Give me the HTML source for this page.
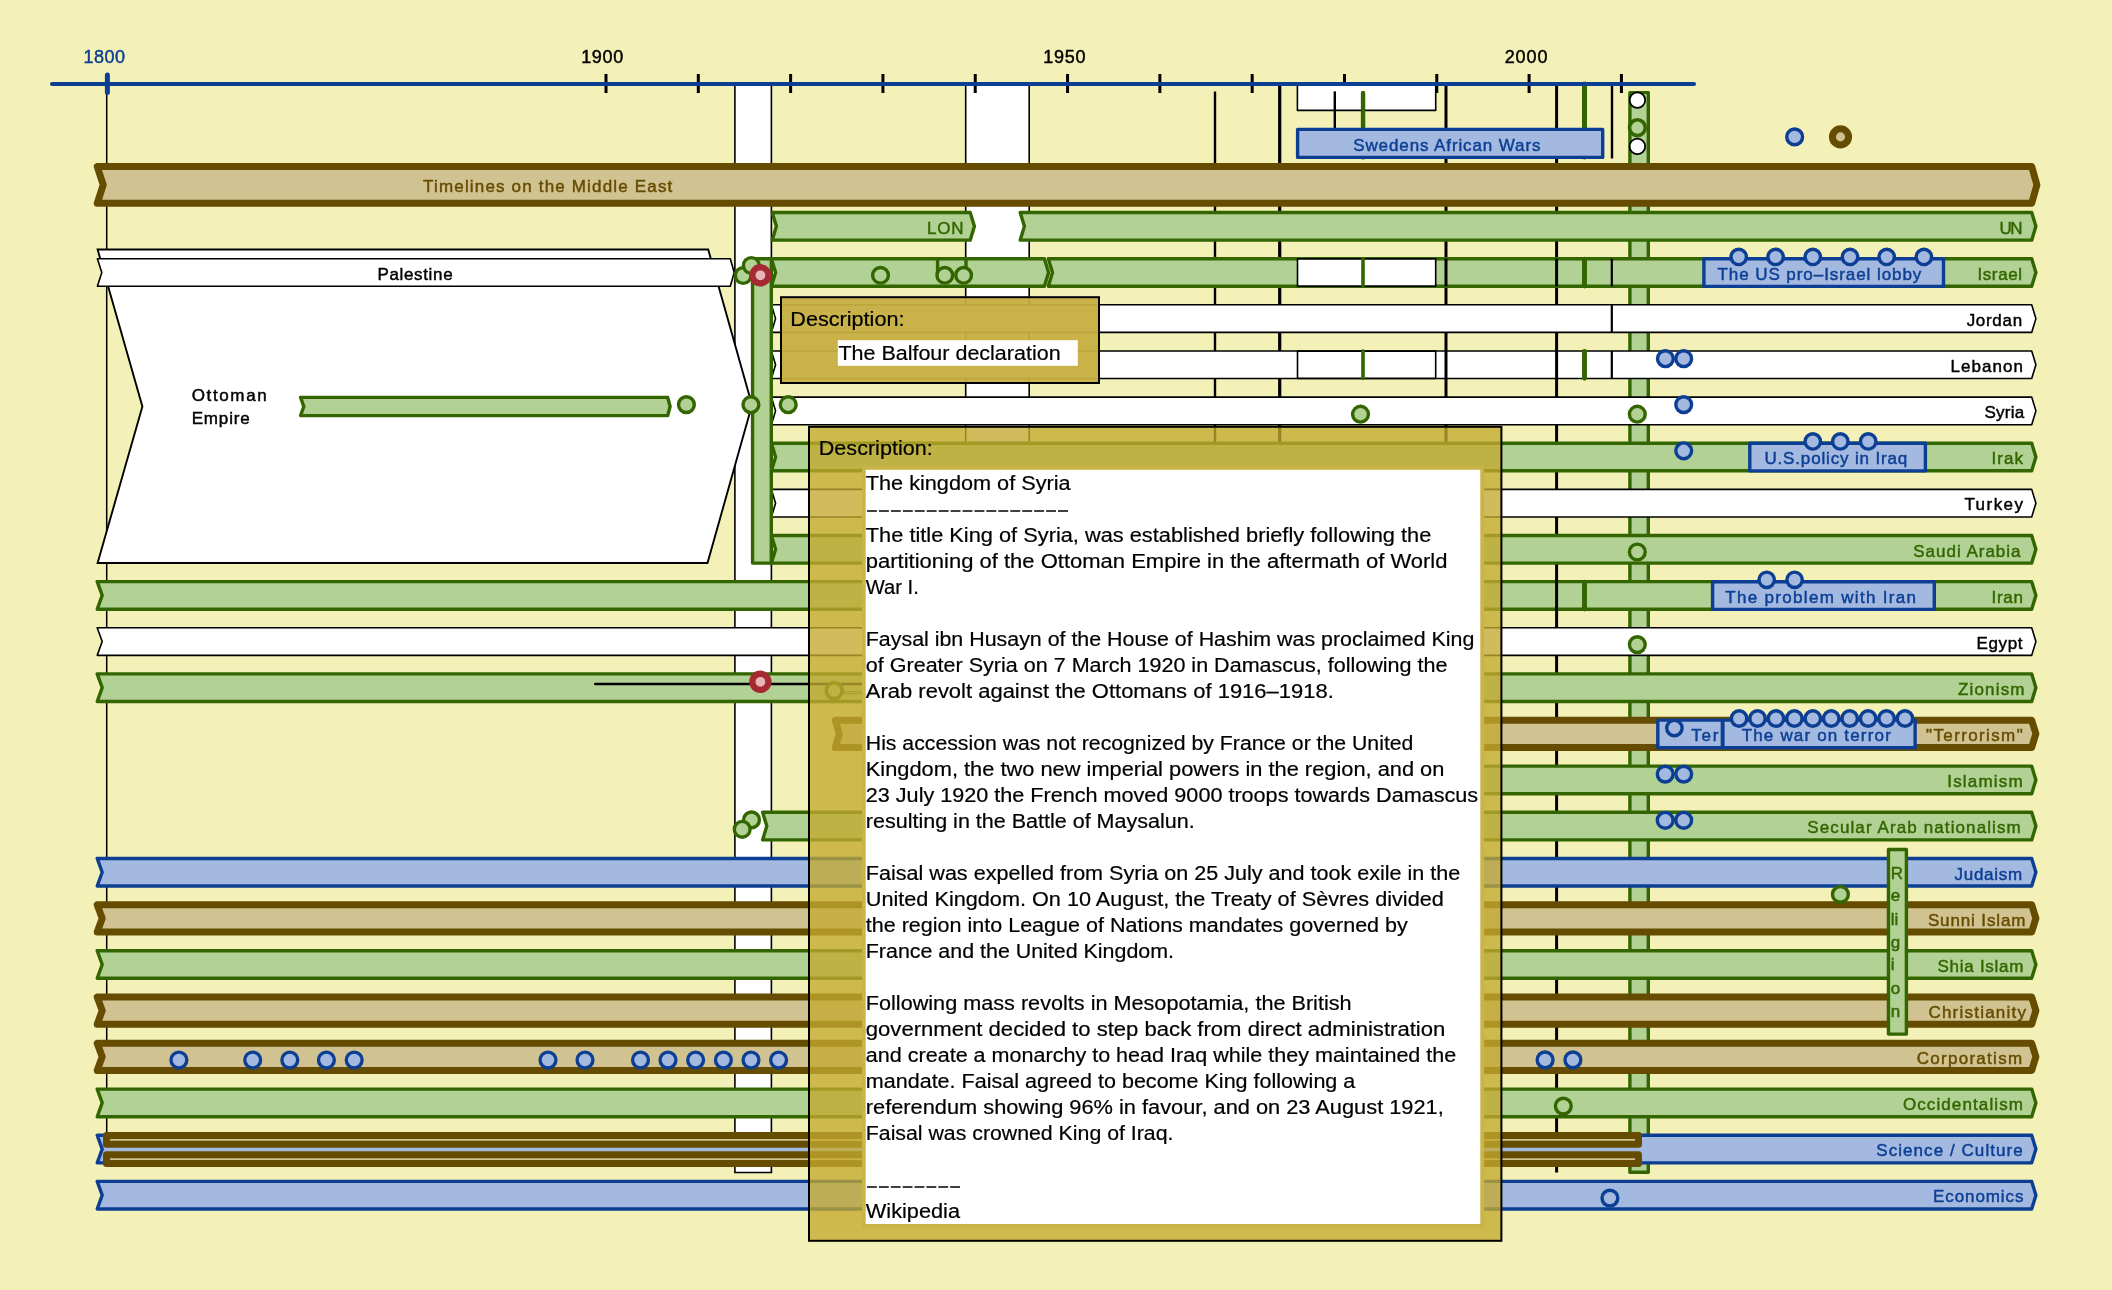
<!DOCTYPE html>
<html><head><meta charset="utf-8"><title>Timelines on the Middle East</title>
<style>html,body{margin:0;padding:0;background:#F3F1B7;overflow:hidden}
svg{display:block;will-change:transform}text{font-family:"Liberation Sans",sans-serif;white-space:pre}</style></head>
<body><svg width="2112" height="1290" viewBox="0 0 2112 1290">
<rect x="0" y="0" width="2112" height="1290" fill="#F3F1B7"/>
<rect x="734.9" y="84" width="36.5" height="1088.5" fill="#fff"/>
<line x1="734.9" y1="84" x2="734.9" y2="1172.5" stroke="#000" stroke-width="1.6" stroke-linecap="butt"/>
<line x1="771.4" y1="84" x2="771.4" y2="1172.5" stroke="#000" stroke-width="1.6" stroke-linecap="butt"/>
<line x1="734.1" y1="1172.5" x2="772.2" y2="1172.5" stroke="#000" stroke-width="1.6" stroke-linecap="butt"/>
<rect x="965.7" y="84" width="63.5" height="1088.5" fill="#fff"/>
<line x1="965.7" y1="84" x2="965.7" y2="1172.5" stroke="#000" stroke-width="1.6" stroke-linecap="butt"/>
<line x1="1029.2" y1="84" x2="1029.2" y2="1172.5" stroke="#000" stroke-width="1.6" stroke-linecap="butt"/>
<line x1="964.9" y1="1172.5" x2="1030" y2="1172.5" stroke="#000" stroke-width="1.6" stroke-linecap="butt"/>
<line x1="606" y1="74" x2="606" y2="93" stroke="#000" stroke-width="3" stroke-linecap="butt"/>
<line x1="698.31" y1="74" x2="698.31" y2="93" stroke="#000" stroke-width="3" stroke-linecap="butt"/>
<line x1="790.62" y1="74" x2="790.62" y2="93" stroke="#000" stroke-width="3" stroke-linecap="butt"/>
<line x1="882.93" y1="74" x2="882.93" y2="93" stroke="#000" stroke-width="3" stroke-linecap="butt"/>
<line x1="975.24" y1="74" x2="975.24" y2="93" stroke="#000" stroke-width="3" stroke-linecap="butt"/>
<line x1="1067.55" y1="74" x2="1067.55" y2="93" stroke="#000" stroke-width="3" stroke-linecap="butt"/>
<line x1="1159.86" y1="74" x2="1159.86" y2="93" stroke="#000" stroke-width="3" stroke-linecap="butt"/>
<line x1="1252.17" y1="74" x2="1252.17" y2="93" stroke="#000" stroke-width="3" stroke-linecap="butt"/>
<line x1="1344.48" y1="74" x2="1344.48" y2="93" stroke="#000" stroke-width="3" stroke-linecap="butt"/>
<line x1="1436.79" y1="74" x2="1436.79" y2="93" stroke="#000" stroke-width="3" stroke-linecap="butt"/>
<line x1="1529.1" y1="74" x2="1529.1" y2="93" stroke="#000" stroke-width="3" stroke-linecap="butt"/>
<line x1="1621.41" y1="74" x2="1621.41" y2="93" stroke="#000" stroke-width="3" stroke-linecap="butt"/>
<line x1="106.7" y1="84" x2="106.7" y2="1150" stroke="#000" stroke-width="1.5" stroke-linecap="butt"/>
<line x1="1215" y1="91.4" x2="1215" y2="1172.5" stroke="#000" stroke-width="2.4" stroke-linecap="butt"/>
<line x1="1279.7" y1="84" x2="1279.7" y2="1172.5" stroke="#000" stroke-width="3.2" stroke-linecap="butt"/>
<line x1="1446" y1="84" x2="1446" y2="1172.5" stroke="#000" stroke-width="3" stroke-linecap="butt"/>
<line x1="1556.6" y1="84" x2="1556.6" y2="1172.5" stroke="#000" stroke-width="3" stroke-linecap="butt"/>
<rect x="1297.4" y="84" width="138.3" height="26.4" fill="#fff" stroke="#000" stroke-width="1.6" stroke-linejoin="round" />
<line x1="1334.8" y1="91.4" x2="1334.8" y2="150" stroke="#000" stroke-width="2.4" stroke-linecap="butt"/>
<line x1="1363.05" y1="93" x2="1363.05" y2="157.4" stroke="#336600" stroke-width="4.4" stroke-linecap="round"/>
<line x1="1612" y1="84" x2="1612" y2="158.5" stroke="#000" stroke-width="2.4" stroke-linecap="butt"/>
<rect x="1629.9" y="92.6" width="18.4" height="1079.6" fill="#B2D194" stroke="#336600" stroke-width="3.4" stroke-linejoin="round" />
<circle cx="1637.4" cy="100.1" r="7.8" fill="#fff" stroke="#000" stroke-width="1.8"/>
<circle cx="1637.4" cy="127.7" r="7.9" fill="#B2D194" stroke="#336600" stroke-width="3.6"/>
<circle cx="1637.4" cy="146.4" r="7.8" fill="#fff" stroke="#000" stroke-width="1.8"/>
<line x1="1584.5" y1="84.1" x2="1584.5" y2="157" stroke="#336600" stroke-width="5" stroke-linecap="round"/>
<path d="M97.6 249.5 L708.2 249.5 L752 405 L707.5 563 L97.6 563 L142.4 406.5 Z" fill="#fff" stroke="#000" stroke-width="1.9" stroke-linejoin="miter"/>
<text x="191.7" y="401.4" font-size="17" fill="#000" stroke="#000" stroke-width="0.45" textLength="75" lengthAdjust="spacing" >Ottoman</text>
<text x="191.7" y="424.4" font-size="17" fill="#000" stroke="#000" stroke-width="0.45" textLength="58" lengthAdjust="spacing" >Empire</text>
<path d="M300.6 397.4 L667.7 397.4 L670.1 406.5 L667.7 415.6 L300.6 415.6 L303.8 406.5 Z" fill="#B2D194" stroke="#336600" stroke-width="3.4" stroke-linejoin="round" />
<circle cx="686.4" cy="404.6" r="7.9" fill="#B2D194" stroke="#336600" stroke-width="3.4"/>
<path d="M97.2 166.5 L2031.7 166.5 L2036.9 184.9 L2031.7 203.3 L97.2 203.3 L103.2 184.9 Z" fill="#D0C291" stroke="#664C00" stroke-width="7" stroke-linejoin="round" />
<text x="423.1" y="191.8" font-size="17" fill="#664C00" stroke="#664C00" stroke-width="0.45" textLength="249.2" lengthAdjust="spacing" >Timelines on the Middle East</text>
<path d="M772.2 212.55 L970.2 212.55 L974.4 226.35 L970.2 240.15 L772.2 240.15 L776.4 226.35 Z" fill="#B2D194" stroke="#336600" stroke-width="3.4" stroke-linejoin="round" />
<path d="M1020.2 212.55 L2031.7 212.55 L2035.9 226.35 L2031.7 240.15 L1020.2 240.15 L1024.4 226.35 Z" fill="#B2D194" stroke="#336600" stroke-width="3.4" stroke-linejoin="round" />
<path d="M97.4 258.69 L730.3 258.69 L734.2 272.49 L730.3 286.29 L97.4 286.29 L101.8 272.49 Z" fill="#fff" stroke="#000" stroke-width="1.6" stroke-linejoin="round" />
<path d="M771.4 258.69 L1044.4 258.69 L1048.6 272.49 L1044.4 286.29 L771.4 286.29 L775.6 272.49 Z" fill="#B2D194" stroke="#336600" stroke-width="3.4" stroke-linejoin="round" />
<path d="M1048.3 258.69 L2031.7 258.69 L2035.9 272.49 L2031.7 286.29 L1048.3 286.29 L1052.5 272.49 Z" fill="#B2D194" stroke="#336600" stroke-width="3.4" stroke-linejoin="round" />
<path d="M771.4 304.82 L2031.7 304.82 L2035.9 318.62 L2031.7 332.42 L771.4 332.42 L775.6 318.62 Z" fill="#fff" stroke="#000" stroke-width="1.6" stroke-linejoin="round" />
<path d="M771.4 350.95 L2031.7 350.95 L2035.9 364.75 L2031.7 378.56 L771.4 378.56 L775.6 364.75 Z" fill="#fff" stroke="#000" stroke-width="1.6" stroke-linejoin="round" />
<path d="M771.4 397.09 L2031.7 397.09 L2035.9 410.89 L2031.7 424.69 L771.4 424.69 L775.6 410.89 Z" fill="#fff" stroke="#000" stroke-width="1.6" stroke-linejoin="round" />
<path d="M771.4 443.22 L2031.7 443.22 L2035.9 457.02 L2031.7 470.82 L771.4 470.82 L775.6 457.02 Z" fill="#B2D194" stroke="#336600" stroke-width="3.4" stroke-linejoin="round" />
<path d="M771.4 489.36 L2031.7 489.36 L2035.9 503.16 L2031.7 516.96 L771.4 516.96 L775.6 503.16 Z" fill="#fff" stroke="#000" stroke-width="1.6" stroke-linejoin="round" />
<path d="M771.4 535.5 L2031.7 535.5 L2035.9 549.29 L2031.7 563.09 L771.4 563.09 L775.6 549.29 Z" fill="#B2D194" stroke="#336600" stroke-width="3.4" stroke-linejoin="round" />
<path d="M97.2 581.63 L2031.7 581.63 L2035.9 595.43 L2031.7 609.23 L97.2 609.23 L102.2 595.43 Z" fill="#B2D194" stroke="#336600" stroke-width="3.4" stroke-linejoin="round" />
<path d="M97.2 627.76 L2031.7 627.76 L2035.9 641.56 L2031.7 655.36 L97.2 655.36 L102.2 641.56 Z" fill="#fff" stroke="#000" stroke-width="1.6" stroke-linejoin="round" />
<path d="M97.2 673.9 L2031.7 673.9 L2035.9 687.7 L2031.7 701.5 L97.2 701.5 L102.2 687.7 Z" fill="#B2D194" stroke="#336600" stroke-width="3.4" stroke-linejoin="round" />
<path d="M835.2 720.23 L2031.7 720.23 L2035.9 733.83 L2031.7 747.43 L835.2 747.43 L839.4 733.83 Z" fill="#D0C291" stroke="#664C00" stroke-width="7" stroke-linejoin="round" />
<path d="M905 766.17 L2031.7 766.17 L2035.9 779.97 L2031.7 793.77 L905 793.77 L909.2 779.97 Z" fill="#B2D194" stroke="#336600" stroke-width="3.4" stroke-linejoin="round" />
<path d="M762.6 812.31 L2031.7 812.31 L2035.9 826.11 L2031.7 839.9 L762.6 839.9 L766.8 826.11 Z" fill="#B2D194" stroke="#336600" stroke-width="3.4" stroke-linejoin="round" />
<path d="M97.2 858.44 L2031.7 858.44 L2035.9 872.24 L2031.7 886.04 L97.2 886.04 L102.2 872.24 Z" fill="#A3B9E0" stroke="#0C3F94" stroke-width="3.4" stroke-linejoin="round" />
<path d="M97.2 904.77 L2031.7 904.77 L2035.9 918.38 L2031.7 931.98 L97.2 931.98 L102.2 918.38 Z" fill="#D0C291" stroke="#664C00" stroke-width="7" stroke-linejoin="round" />
<path d="M97.2 950.71 L2031.7 950.71 L2035.9 964.51 L2031.7 978.31 L97.2 978.31 L102.2 964.51 Z" fill="#B2D194" stroke="#336600" stroke-width="3.4" stroke-linejoin="round" />
<path d="M97.2 997.04 L2031.7 997.04 L2035.9 1010.64 L2031.7 1024.24 L97.2 1024.24 L102.2 1010.64 Z" fill="#D0C291" stroke="#664C00" stroke-width="7" stroke-linejoin="round" />
<path d="M97.2 1043.18 L2031.7 1043.18 L2035.9 1056.78 L2031.7 1070.38 L97.2 1070.38 L102.2 1056.78 Z" fill="#D0C291" stroke="#664C00" stroke-width="7" stroke-linejoin="round" />
<path d="M97.2 1089.12 L2031.7 1089.12 L2035.9 1102.91 L2031.7 1116.71 L97.2 1116.71 L102.2 1102.91 Z" fill="#B2D194" stroke="#336600" stroke-width="3.4" stroke-linejoin="round" />
<path d="M97.2 1135.25 L2031.7 1135.25 L2035.9 1149.05 L2031.7 1162.85 L97.2 1162.85 L102.2 1149.05 Z" fill="#A3B9E0" stroke="#0C3F94" stroke-width="3.4" stroke-linejoin="round" />
<path d="M97.2 1181.38 L2031.7 1181.38 L2035.9 1195.18 L2031.7 1208.98 L97.2 1208.98 L102.2 1195.18 Z" fill="#A3B9E0" stroke="#0C3F94" stroke-width="3.4" stroke-linejoin="round" />
<rect x="752.55" y="258.7" width="18.75" height="304.39" fill="#B2D194" stroke="#336600" stroke-width="3.4" stroke-linejoin="round" />
<rect x="1297.5" y="258.88" width="138.2" height="27.2" fill="#fff" stroke="#000" stroke-width="1.6" stroke-linejoin="round" />
<line x1="1363" y1="258.88" x2="1363" y2="286.09" stroke="#336600" stroke-width="3.6" stroke-linecap="round"/>
<line x1="1446" y1="258.69" x2="1446" y2="286.29" stroke="#000" stroke-width="3" stroke-linecap="butt"/>
<line x1="1556.6" y1="258.69" x2="1556.6" y2="286.29" stroke="#000" stroke-width="3" stroke-linecap="butt"/>
<line x1="1584.5" y1="259.29" x2="1584.5" y2="285.99" stroke="#336600" stroke-width="4.9" stroke-linecap="round"/>
<line x1="1611.8" y1="258.69" x2="1611.8" y2="286.29" stroke="#000" stroke-width="2.2" stroke-linecap="butt"/>
<line x1="937.6" y1="258.69" x2="937.6" y2="276" stroke="#336600" stroke-width="3.4" stroke-linecap="butt"/>
<line x1="966" y1="258.69" x2="966" y2="270" stroke="#336600" stroke-width="3.4" stroke-linecap="butt"/>
<line x1="1611.8" y1="304.82" x2="1611.8" y2="332.42" stroke="#000" stroke-width="2.2" stroke-linecap="butt"/>
<rect x="1297.5" y="351.15" width="138.2" height="27.2" fill="#fff" stroke="#000" stroke-width="1.6" stroke-linejoin="round" />
<line x1="1363" y1="351.15" x2="1363" y2="378.36" stroke="#336600" stroke-width="3.6" stroke-linecap="round"/>
<line x1="1446" y1="350.95" x2="1446" y2="378.56" stroke="#000" stroke-width="3" stroke-linecap="butt"/>
<line x1="1556.6" y1="350.95" x2="1556.6" y2="378.56" stroke="#000" stroke-width="3" stroke-linecap="butt"/>
<line x1="1584.5" y1="351.56" x2="1584.5" y2="378.25" stroke="#336600" stroke-width="4.9" stroke-linecap="round"/>
<line x1="1611.8" y1="350.95" x2="1611.8" y2="378.56" stroke="#000" stroke-width="2.2" stroke-linecap="butt"/>
<line x1="1556.6" y1="579.93" x2="1556.6" y2="610.93" stroke="#000" stroke-width="3" stroke-linecap="butt"/>
<line x1="1584.5" y1="582.23" x2="1584.5" y2="608.93" stroke="#336600" stroke-width="4.9" stroke-linecap="round"/>
<line x1="595.2" y1="684" x2="866" y2="684" stroke="#000" stroke-width="2.4" stroke-linecap="round"/>
<rect x="106.5" y="1135.4" width="1532" height="8.8" fill="#D0C291" stroke="#664C00" stroke-width="7" stroke-linejoin="round"/>
<rect x="106.5" y="1154.7" width="1532" height="8.8" fill="#D0C291" stroke="#664C00" stroke-width="7" stroke-linejoin="round"/>
<rect x="1888.45" y="849.5" width="17.95" height="184.6" fill="#B2D194" stroke="#336600" stroke-width="3.4" stroke-linejoin="round" />
<text x="1890.8" y="879" font-size="17" fill="#336600" stroke="#336600" stroke-width="0.45" >R</text>
<text x="1890.8" y="901.4" font-size="17" fill="#336600" stroke="#336600" stroke-width="0.45" >e</text>
<text x="1890.8" y="925.1" font-size="17" fill="#336600" stroke="#336600" stroke-width="0.45" >li</text>
<text x="1890.8" y="947.5" font-size="17" fill="#336600" stroke="#336600" stroke-width="0.45" >g</text>
<text x="1890.8" y="970.1" font-size="17" fill="#336600" stroke="#336600" stroke-width="0.45" >i</text>
<text x="1890.8" y="993.6" font-size="17" fill="#336600" stroke="#336600" stroke-width="0.45" >o</text>
<text x="1890.8" y="1017" font-size="17" fill="#336600" stroke="#336600" stroke-width="0.45" >n</text>
<rect x="1297.6" y="129.4" width="305.1" height="28" fill="#A3B9E0" stroke="#0C3F94" stroke-width="3.4" stroke-linejoin="round" />
<text x="1353.2" y="150.7" font-size="17" fill="#0C3F94" stroke="#0C3F94" stroke-width="0.45" textLength="187.3" lengthAdjust="spacing" >Swedens African Wars</text>
<rect x="1703.9" y="258.79" width="239.6" height="27.6" fill="#A3B9E0" stroke="#0C3F94" stroke-width="3.4" stroke-linejoin="round" />
<circle cx="1738.7" cy="256.89" r="7.7" fill="#A3B9E0" stroke="#0C3F94" stroke-width="3.4"/>
<circle cx="1775.6" cy="256.89" r="7.7" fill="#A3B9E0" stroke="#0C3F94" stroke-width="3.4"/>
<circle cx="1812.8" cy="256.89" r="7.7" fill="#A3B9E0" stroke="#0C3F94" stroke-width="3.4"/>
<circle cx="1850" cy="256.89" r="7.7" fill="#A3B9E0" stroke="#0C3F94" stroke-width="3.4"/>
<circle cx="1886.7" cy="256.89" r="7.7" fill="#A3B9E0" stroke="#0C3F94" stroke-width="3.4"/>
<circle cx="1923.9" cy="256.89" r="7.7" fill="#A3B9E0" stroke="#0C3F94" stroke-width="3.4"/>
<text x="1717.5" y="279.79" font-size="17" fill="#0C3F94" stroke="#0C3F94" stroke-width="0.45" textLength="203.8" lengthAdjust="spacing" >The US pro–Israel lobby</text>
<rect x="1749.8" y="443.32" width="175.6" height="27.6" fill="#A3B9E0" stroke="#0C3F94" stroke-width="3.4" stroke-linejoin="round" />
<circle cx="1812.8" cy="441.43" r="7.7" fill="#A3B9E0" stroke="#0C3F94" stroke-width="3.4"/>
<circle cx="1840.3" cy="441.43" r="7.7" fill="#A3B9E0" stroke="#0C3F94" stroke-width="3.4"/>
<circle cx="1868.2" cy="441.43" r="7.7" fill="#A3B9E0" stroke="#0C3F94" stroke-width="3.4"/>
<text x="1764.4" y="464.32" font-size="17" fill="#0C3F94" stroke="#0C3F94" stroke-width="0.45" textLength="142.9" lengthAdjust="spacing" >U.S.policy in Iraq</text>
<rect x="1712.6" y="581.73" width="221.7" height="27.6" fill="#A3B9E0" stroke="#0C3F94" stroke-width="3.4" stroke-linejoin="round" />
<circle cx="1766.7" cy="579.83" r="7.7" fill="#A3B9E0" stroke="#0C3F94" stroke-width="3.4"/>
<circle cx="1794.6" cy="579.83" r="7.7" fill="#A3B9E0" stroke="#0C3F94" stroke-width="3.4"/>
<text x="1725.3" y="602.73" font-size="17" fill="#0C3F94" stroke="#0C3F94" stroke-width="0.45" textLength="190.7" lengthAdjust="spacing" >The problem with Iran</text>
<clipPath id="cpT"><rect x="1650" y="715" width="71.3" height="40"/></clipPath>
<rect x="1657.8" y="720.13" width="64.6" height="27.6" fill="#A3B9E0" stroke="#0C3F94" stroke-width="3.4" stroke-linejoin="round" />
<circle cx="1674.4" cy="728.1" r="7.7" fill="#A3B9E0" stroke="#0C3F94" stroke-width="3.4"/>
<text x="1691.3" y="741.13" font-size="17" fill="#0C3F94" stroke="#0C3F94" stroke-width="0.45" textLength="84.7" lengthAdjust="spacing" clip-path="url(#cpT)">Terrorism</text>
<rect x="1722.9" y="720.13" width="192.2" height="27.6" fill="#A3B9E0" stroke="#0C3F94" stroke-width="3.4" stroke-linejoin="round" />
<circle cx="1739.1" cy="718.5" r="7.7" fill="#A3B9E0" stroke="#0C3F94" stroke-width="3.4"/>
<circle cx="1757.53" cy="718.5" r="7.7" fill="#A3B9E0" stroke="#0C3F94" stroke-width="3.4"/>
<circle cx="1775.96" cy="718.5" r="7.7" fill="#A3B9E0" stroke="#0C3F94" stroke-width="3.4"/>
<circle cx="1794.39" cy="718.5" r="7.7" fill="#A3B9E0" stroke="#0C3F94" stroke-width="3.4"/>
<circle cx="1812.82" cy="718.5" r="7.7" fill="#A3B9E0" stroke="#0C3F94" stroke-width="3.4"/>
<circle cx="1831.25" cy="718.5" r="7.7" fill="#A3B9E0" stroke="#0C3F94" stroke-width="3.4"/>
<circle cx="1849.68" cy="718.5" r="7.7" fill="#A3B9E0" stroke="#0C3F94" stroke-width="3.4"/>
<circle cx="1868.11" cy="718.5" r="7.7" fill="#A3B9E0" stroke="#0C3F94" stroke-width="3.4"/>
<circle cx="1886.54" cy="718.5" r="7.7" fill="#A3B9E0" stroke="#0C3F94" stroke-width="3.4"/>
<circle cx="1904.97" cy="718.5" r="7.7" fill="#A3B9E0" stroke="#0C3F94" stroke-width="3.4"/>
<text x="1741.7" y="741.13" font-size="17" fill="#0C3F94" stroke="#0C3F94" stroke-width="0.45" textLength="149.1" lengthAdjust="spacing" >The war on terror</text>
<circle cx="743.2" cy="275.5" r="7.9" fill="#B2D194" stroke="#336600" stroke-width="3.4"/>
<circle cx="751.3" cy="265.5" r="7.9" fill="#B2D194" stroke="#336600" stroke-width="3.4"/>
<circle cx="760.4" cy="275.3" r="8.05" fill="#E8B6B8" stroke="#A52A31" stroke-width="6.3"/>
<circle cx="880.5" cy="275.3" r="7.85" fill="#B2D194" stroke="#336600" stroke-width="3.4"/>
<circle cx="944.8" cy="275.3" r="7.85" fill="#B2D194" stroke="#336600" stroke-width="3.4"/>
<circle cx="963.6" cy="275.3" r="7.85" fill="#B2D194" stroke="#336600" stroke-width="3.4"/>
<circle cx="750.9" cy="404.7" r="7.9" fill="#B2D194" stroke="#336600" stroke-width="3.4"/>
<circle cx="788.2" cy="404.7" r="7.9" fill="#B2D194" stroke="#336600" stroke-width="3.4"/>
<circle cx="1360.5" cy="414.2" r="7.9" fill="#B2D194" stroke="#336600" stroke-width="3.4"/>
<circle cx="1637.3" cy="414.2" r="7.9" fill="#B2D194" stroke="#336600" stroke-width="3.4"/>
<circle cx="1637.3" cy="552" r="7.9" fill="#B2D194" stroke="#336600" stroke-width="3.4"/>
<circle cx="1637.3" cy="644.6" r="7.9" fill="#B2D194" stroke="#336600" stroke-width="3.4"/>
<circle cx="834.2" cy="690.6" r="7.9" fill="#B2D194" stroke="#336600" stroke-width="3.4"/>
<circle cx="751.5" cy="819.9" r="7.9" fill="#B2D194" stroke="#336600" stroke-width="3.4"/>
<circle cx="742.2" cy="829.3" r="7.9" fill="#B2D194" stroke="#336600" stroke-width="3.4"/>
<circle cx="1840.4" cy="894.4" r="7.9" fill="#B2D194" stroke="#336600" stroke-width="3.4"/>
<circle cx="1563.3" cy="1106.1" r="7.9" fill="#B2D194" stroke="#336600" stroke-width="3.4"/>
<rect x="836" y="691.8" width="34" height="1.9" fill="none" stroke="#336600" stroke-width="0.9"/>
<circle cx="834.2" cy="690.6" r="7.9" fill="#B2D194" stroke="#336600" stroke-width="3.4"/>
<circle cx="760.4" cy="681.8" r="8.05" fill="#E8B6B8" stroke="#A52A31" stroke-width="6.3"/>
<circle cx="1665.4" cy="358.7" r="7.9" fill="#A3B9E0" stroke="#0C3F94" stroke-width="3.4"/>
<circle cx="1683.7" cy="358.7" r="7.9" fill="#A3B9E0" stroke="#0C3F94" stroke-width="3.4"/>
<circle cx="1683.7" cy="404.6" r="7.9" fill="#A3B9E0" stroke="#0C3F94" stroke-width="3.4"/>
<circle cx="1683.7" cy="450.8" r="7.9" fill="#A3B9E0" stroke="#0C3F94" stroke-width="3.4"/>
<circle cx="1665.2" cy="774.1" r="7.9" fill="#A3B9E0" stroke="#0C3F94" stroke-width="3.4"/>
<circle cx="1683.7" cy="774.1" r="7.9" fill="#A3B9E0" stroke="#0C3F94" stroke-width="3.4"/>
<circle cx="1665.2" cy="820.3" r="7.9" fill="#A3B9E0" stroke="#0C3F94" stroke-width="3.4"/>
<circle cx="1683.7" cy="820.3" r="7.9" fill="#A3B9E0" stroke="#0C3F94" stroke-width="3.4"/>
<circle cx="1545.1" cy="1059.9" r="7.9" fill="#A3B9E0" stroke="#0C3F94" stroke-width="3.4"/>
<circle cx="1572.9" cy="1059.9" r="7.9" fill="#A3B9E0" stroke="#0C3F94" stroke-width="3.4"/>
<circle cx="1609.9" cy="1198.1" r="7.9" fill="#A3B9E0" stroke="#0C3F94" stroke-width="3.4"/>
<circle cx="1794.65" cy="136.9" r="7.9" fill="#A3B9E0" stroke="#0C3F94" stroke-width="3.4"/>
<circle cx="178.9" cy="1060" r="7.9" fill="#A3B9E0" stroke="#0C3F94" stroke-width="3.4"/>
<circle cx="252.7" cy="1060" r="7.9" fill="#A3B9E0" stroke="#0C3F94" stroke-width="3.4"/>
<circle cx="289.8" cy="1060" r="7.9" fill="#A3B9E0" stroke="#0C3F94" stroke-width="3.4"/>
<circle cx="326.4" cy="1060" r="7.9" fill="#A3B9E0" stroke="#0C3F94" stroke-width="3.4"/>
<circle cx="354.2" cy="1060" r="7.9" fill="#A3B9E0" stroke="#0C3F94" stroke-width="3.4"/>
<circle cx="548" cy="1060" r="7.9" fill="#A3B9E0" stroke="#0C3F94" stroke-width="3.4"/>
<circle cx="585" cy="1060" r="7.9" fill="#A3B9E0" stroke="#0C3F94" stroke-width="3.4"/>
<circle cx="640.5" cy="1060" r="7.9" fill="#A3B9E0" stroke="#0C3F94" stroke-width="3.4"/>
<circle cx="668" cy="1060" r="7.9" fill="#A3B9E0" stroke="#0C3F94" stroke-width="3.4"/>
<circle cx="695.6" cy="1060" r="7.9" fill="#A3B9E0" stroke="#0C3F94" stroke-width="3.4"/>
<circle cx="723.4" cy="1060" r="7.9" fill="#A3B9E0" stroke="#0C3F94" stroke-width="3.4"/>
<circle cx="751" cy="1060" r="7.9" fill="#A3B9E0" stroke="#0C3F94" stroke-width="3.4"/>
<circle cx="778.6" cy="1060" r="7.9" fill="#A3B9E0" stroke="#0C3F94" stroke-width="3.4"/>
<circle cx="1840.5" cy="136.9" r="8.05" fill="#D0C291" stroke="#664C00" stroke-width="7"/>
<text x="927" y="233.65" font-size="17" fill="#336600" stroke="#336600" stroke-width="0.45" textLength="36.6" lengthAdjust="spacing" >LON</text>
<text x="1999.5" y="233.65" font-size="17" fill="#336600" stroke="#336600" stroke-width="0.45" textLength="23" lengthAdjust="spacing" >UN</text>
<text x="1977.4" y="279.79" font-size="17" fill="#336600" stroke="#336600" stroke-width="0.45" textLength="44.7" lengthAdjust="spacing" >Israel</text>
<text x="1966.7" y="325.92" font-size="17" fill="#000" stroke="#000" stroke-width="0.45" textLength="55.4" lengthAdjust="spacing" >Jordan</text>
<text x="1950.5" y="372.06" font-size="17" fill="#000" stroke="#000" stroke-width="0.45" textLength="72.5" lengthAdjust="spacing" >Lebanon</text>
<text x="1984.5" y="418.19" font-size="17" fill="#000" stroke="#000" stroke-width="0.45" textLength="39.8" lengthAdjust="spacing" >Syria</text>
<text x="1991.4" y="464.32" font-size="17" fill="#336600" stroke="#336600" stroke-width="0.45" textLength="31.6" lengthAdjust="spacing" >Irak</text>
<text x="1964.4" y="510.46" font-size="17" fill="#000" stroke="#000" stroke-width="0.45" textLength="58.6" lengthAdjust="spacing" >Turkey</text>
<text x="1913.3" y="556.59" font-size="17" fill="#336600" stroke="#336600" stroke-width="0.45" textLength="107.2" lengthAdjust="spacing" >Saudi Arabia</text>
<text x="1991.4" y="602.73" font-size="17" fill="#336600" stroke="#336600" stroke-width="0.45" textLength="31.6" lengthAdjust="spacing" >Iran</text>
<text x="1976.5" y="648.86" font-size="17" fill="#000" stroke="#000" stroke-width="0.45" textLength="46" lengthAdjust="spacing" >Egypt</text>
<text x="1957.9" y="695" font-size="17" fill="#336600" stroke="#336600" stroke-width="0.45" textLength="66.6" lengthAdjust="spacing" >Zionism</text>
<text x="1926" y="741.13" font-size="17" fill="#664C00" stroke="#664C00" stroke-width="0.45" textLength="96.7" lengthAdjust="spacing" >"Terrorism"</text>
<text x="1947.2" y="787.27" font-size="17" fill="#336600" stroke="#336600" stroke-width="0.45" textLength="75.5" lengthAdjust="spacing" >Islamism</text>
<text x="1807.3" y="833.4" font-size="17" fill="#336600" stroke="#336600" stroke-width="0.45" textLength="213.4" lengthAdjust="spacing" >Secular Arab nationalism</text>
<text x="1954.5" y="879.54" font-size="17" fill="#0C3F94" stroke="#0C3F94" stroke-width="0.45" textLength="67.6" lengthAdjust="spacing" >Judaism</text>
<text x="1927.9" y="925.67" font-size="17" fill="#664C00" stroke="#664C00" stroke-width="0.45" textLength="97.6" lengthAdjust="spacing" >Sunni Islam</text>
<text x="1937.5" y="971.81" font-size="17" fill="#336600" stroke="#336600" stroke-width="0.45" textLength="85.9" lengthAdjust="spacing" >Shia Islam</text>
<text x="1928.4" y="1017.94" font-size="17" fill="#664C00" stroke="#664C00" stroke-width="0.45" textLength="97.6" lengthAdjust="spacing" >Christianity</text>
<text x="1916.7" y="1064.08" font-size="17" fill="#664C00" stroke="#664C00" stroke-width="0.45" textLength="105.4" lengthAdjust="spacing" >Corporatism</text>
<text x="1902.9" y="1110.21" font-size="17" fill="#336600" stroke="#336600" stroke-width="0.45" textLength="120" lengthAdjust="spacing" >Occidentalism</text>
<text x="1876.3" y="1156.35" font-size="17" fill="#0C3F94" stroke="#0C3F94" stroke-width="0.45" textLength="146.4" lengthAdjust="spacing" >Science / Culture</text>
<text x="1933.1" y="1202.48" font-size="17" fill="#0C3F94" stroke="#0C3F94" stroke-width="0.45" textLength="90.3" lengthAdjust="spacing" >Economics</text>
<text x="377.4" y="279.5" font-size="17" fill="#000" stroke="#000" stroke-width="0.45" textLength="75.2" lengthAdjust="spacing" >Palestine</text>
<line x1="52" y1="84" x2="1694" y2="84" stroke="#0C3F94" stroke-width="4.1" stroke-linecap="round"/>
<line x1="107.4" y1="75" x2="107.4" y2="92.5" stroke="#0C3F94" stroke-width="5" stroke-linecap="round"/>
<text x="83.5" y="63.2" font-size="18" fill="#0C3F94" stroke="#0C3F94" stroke-width="0.45" textLength="41.4" lengthAdjust="spacing" >1800</text>
<text x="581.2" y="63.2" font-size="18" fill="#000" stroke="#000" stroke-width="0.45" textLength="42" lengthAdjust="spacing" >1900</text>
<text x="1043.3" y="63.2" font-size="18" fill="#000" stroke="#000" stroke-width="0.45" textLength="42.1" lengthAdjust="spacing" >1950</text>
<text x="1504.7" y="63.2" font-size="18" fill="#000" stroke="#000" stroke-width="0.45" textLength="42.7" lengthAdjust="spacing" >2000</text>
<rect x="781" y="297.2" width="318" height="85.8" fill="#C6AE40" fill-opacity="0.95" stroke="#000" stroke-width="2"/>
<rect x="837.8" y="340.2" width="240" height="25.6" fill="#fff"/>
<text x="790.3" y="326.2" font-size="20" fill="#000" stroke="#000" stroke-width="0.2" textLength="114.2" lengthAdjust="spacingAndGlyphs" >Description:</text>
<text x="838.4" y="360.3" font-size="20" fill="#000" stroke="#000" stroke-width="0.2" textLength="222.2" lengthAdjust="spacingAndGlyphs" >The Balfour declaration</text>
<rect x="809" y="426.8" width="692.4" height="814" fill="#C3A930" fill-opacity="0.78" stroke="#000" stroke-width="2"/>
<rect x="862" y="466" width="622.2" height="762.1" fill="#C9B447"/>
<rect x="865.7" y="469.8" width="614.6" height="754.2" fill="#fff"/>
<text x="818.8" y="455" font-size="20" fill="#000" stroke="#000" stroke-width="0.2" textLength="113.9" lengthAdjust="spacingAndGlyphs" >Description:</text>
<text x="865.8" y="489.7" font-size="20" fill="#000" stroke="#000" stroke-width="0.2" textLength="204.8" lengthAdjust="spacingAndGlyphs" >The kingdom of Syria</text>
<line x1="867" y1="511" x2="1068" y2="511" stroke="#000" stroke-width="1.5" stroke-dasharray="9.94 2"/>
<text x="865.8" y="541.7" font-size="20" fill="#000" stroke="#000" stroke-width="0.2" textLength="565.5" lengthAdjust="spacingAndGlyphs" >The title King of Syria, was established briefly following the</text>
<text x="865.8" y="567.7" font-size="20" fill="#000" stroke="#000" stroke-width="0.2" textLength="581.7" lengthAdjust="spacingAndGlyphs" >partitioning of the Ottoman Empire in the aftermath of World</text>
<text x="865.8" y="593.7" font-size="20" fill="#000" stroke="#000" stroke-width="0.2" textLength="53" lengthAdjust="spacingAndGlyphs" >War I.</text>
<text x="865.8" y="645.7" font-size="20" fill="#000" stroke="#000" stroke-width="0.2" textLength="608.6" lengthAdjust="spacingAndGlyphs" >Faysal ibn Husayn of the House of Hashim was proclaimed King</text>
<text x="865.8" y="671.7" font-size="20" fill="#000" stroke="#000" stroke-width="0.2" textLength="581.7" lengthAdjust="spacingAndGlyphs" >of Greater Syria on 7 March 1920 in Damascus, following the</text>
<text x="865.8" y="697.7" font-size="20" fill="#000" stroke="#000" stroke-width="0.2" textLength="468" lengthAdjust="spacingAndGlyphs" >Arab revolt against the Ottomans of 1916–1918.</text>
<text x="865.8" y="749.7" font-size="20" fill="#000" stroke="#000" stroke-width="0.2" textLength="547.6" lengthAdjust="spacingAndGlyphs" >His accession was not recognized by France or the United</text>
<text x="865.8" y="775.7" font-size="20" fill="#000" stroke="#000" stroke-width="0.2" textLength="578.6" lengthAdjust="spacingAndGlyphs" >Kingdom, the two new imperial powers in the region, and on</text>
<text x="865.8" y="801.7" font-size="20" fill="#000" stroke="#000" stroke-width="0.2" textLength="612.3" lengthAdjust="spacingAndGlyphs" >23 July 1920 the French moved 9000 troops towards Damascus</text>
<text x="865.8" y="827.7" font-size="20" fill="#000" stroke="#000" stroke-width="0.2" textLength="328.9" lengthAdjust="spacingAndGlyphs" >resulting in the Battle of Maysalun.</text>
<text x="865.8" y="879.7" font-size="20" fill="#000" stroke="#000" stroke-width="0.2" textLength="594.5" lengthAdjust="spacingAndGlyphs" >Faisal was expelled from Syria on 25 July and took exile in the</text>
<text x="865.8" y="905.7" font-size="20" fill="#000" stroke="#000" stroke-width="0.2" textLength="578" lengthAdjust="spacingAndGlyphs" >United Kingdom. On 10 August, the Treaty of Sèvres divided</text>
<text x="865.8" y="931.7" font-size="20" fill="#000" stroke="#000" stroke-width="0.2" textLength="542" lengthAdjust="spacingAndGlyphs" >the region into League of Nations mandates governed by</text>
<text x="865.8" y="957.7" font-size="20" fill="#000" stroke="#000" stroke-width="0.2" textLength="308.2" lengthAdjust="spacingAndGlyphs" >France and the United Kingdom.</text>
<text x="865.8" y="1009.7" font-size="20" fill="#000" stroke="#000" stroke-width="0.2" textLength="485.8" lengthAdjust="spacingAndGlyphs" >Following mass revolts in Mesopotamia, the British</text>
<text x="865.8" y="1035.7" font-size="20" fill="#000" stroke="#000" stroke-width="0.2" textLength="579.5" lengthAdjust="spacingAndGlyphs" >government decided to step back from direct administration</text>
<text x="865.8" y="1061.7" font-size="20" fill="#000" stroke="#000" stroke-width="0.2" textLength="590.5" lengthAdjust="spacingAndGlyphs" >and create a monarchy to head Iraq while they maintained the</text>
<text x="865.8" y="1087.7" font-size="20" fill="#000" stroke="#000" stroke-width="0.2" textLength="489.5" lengthAdjust="spacingAndGlyphs" >mandate. Faisal agreed to become King following a</text>
<text x="865.8" y="1113.7" font-size="20" fill="#000" stroke="#000" stroke-width="0.2" textLength="578" lengthAdjust="spacingAndGlyphs" >referendum showing 96% in favour, and on 23 August 1921,</text>
<text x="865.8" y="1139.7" font-size="20" fill="#000" stroke="#000" stroke-width="0.2" textLength="307.6" lengthAdjust="spacingAndGlyphs" >Faisal was crowned King of Iraq.</text>
<line x1="867" y1="1187" x2="960" y2="1187" stroke="#000" stroke-width="1.5" stroke-dasharray="9.88 2"/>
<text x="865.8" y="1217.7" font-size="20" fill="#000" stroke="#000" stroke-width="0.2" textLength="94.2" lengthAdjust="spacingAndGlyphs" >Wikipedia</text>
</svg></body></html>
